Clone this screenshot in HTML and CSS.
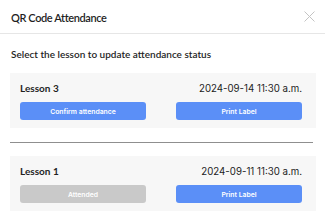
FILE: index.html
```html
<!DOCTYPE html>
<html>
<head>
<meta charset="utf-8">
<link rel="stylesheet" href="styles.css">
</head>
<body>
<div class="modal">
  <div class="header">
    <div class="title">QR Code Attendance</div>
    <svg class="close" width="11" height="11" viewBox="0 0 11 11"><path d="M0.5 0.5L10.5 10.5M10.5 0.5L0.5 10.5" stroke="#c4c4c4" stroke-width="1" fill="none"/></svg>
  </div>
  <div class="body">
    <div class="subtitle">Select the lesson to update attendance status</div>
    <div class="card">
      <div class="row">
        <div class="lesson">Lesson 3</div>
        <div class="date">2024-09-14 11:30 a.m.</div>
      </div>
      <div class="row buttons">
        <button class="btn primary">Confirm attendance</button>
        <button class="btn primary">Print Label</button>
      </div>
    </div>
    <div class="divider"></div>
    <div class="card">
      <div class="row">
        <div class="lesson">Lesson 1</div>
        <div class="date">2024-09-11 11:30 a.m.</div>
      </div>
      <div class="row buttons">
        <button class="btn disabled">Attended</button>
        <button class="btn primary">Print Label</button>
      </div>
    </div>
  </div>
</div>
</body>
</html>
```
FILE: styles.css
```css
html, body {
  margin: 0;
  padding: 0;
  background: #ffffff;
}
.modal {
  width: 325px;
  height: 219px;
  font-family: Lato, "Noto Sans", sans-serif;
  color: #1f1f1f;
  overflow: hidden;
}
.header {
  height: 34px;
  border-bottom: 1px solid #e6e6e6;
  display: flex;
  align-items: center;
  justify-content: space-between;
  padding: 0 10px 0 11px;
  box-sizing: border-box;
}
.title {
  font-size: 11px;
  font-weight: 600;
  letter-spacing: -0.4px;
  padding-top: 2px;
}
.body {
  padding: 0 9px 0 10px;
}
.subtitle {
  font-size: 10px;
  font-weight: 600;
  padding: 12px 0 0 1px;
  height: 27px;
  line-height: 16px;
  box-sizing: border-box;
  margin-bottom: 12px;
}
.card {
  background: #f7f7f7;
  padding: 8px 14px 8px 10px;
  height: 55px;
  box-sizing: border-box;
}
.row {
  display: flex;
  justify-content: space-between;
  align-items: center;
}
.lesson {
  font-size: 10px;
  font-weight: 700;
  line-height: 15px;
}
.date {
  font-family: Inter, "Liberation Sans", sans-serif;
  font-size: 9.7px;
  line-height: 15px;
  color: #222;
}
.buttons {
  margin-top: 6px;
}
.btn {
  width: 126px;
  height: 18px;
  border: none;
  border-radius: 3px;
  color: #fff;
  font-family: Inter, "Liberation Sans", sans-serif;
  font-size: 6.85px;
  font-weight: 600;
  padding: 0;
}
.primary {
  background: #5b8ff7;
}
.disabled {
  background: #c9c9c9;
}
.divider {
  height: 1px;
  background: #8f8f8f;
  margin: 14px 3px 13px 0;
}
```
